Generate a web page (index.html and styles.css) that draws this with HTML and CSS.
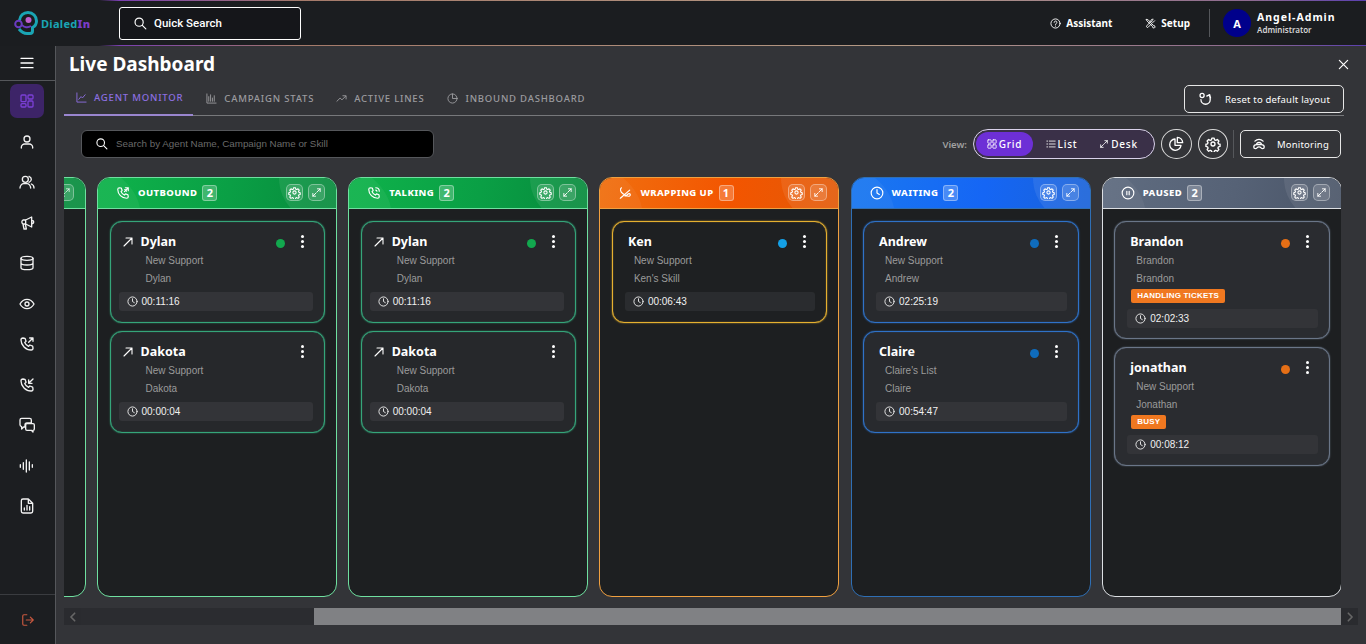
FILE: index.html
```html
<!DOCTYPE html>
<html lang="en">
<head>
  <meta charset="UTF-8">
  <title>Live Dashboard</title>
  <link rel="stylesheet" href="styles.css">
</head>
<body>

  <svg class="sprite" width="0" height="0">
    <symbol id="i-search" viewBox="0 0 24 24"><circle cx="10.5" cy="10.5" r="7"/><path d="M16 16l6 6"/></symbol>
    <symbol id="i-gear" viewBox="0 0 24 24"><circle cx="12" cy="12" r="3"/><path d="M10.3 3.2h3.4l.6 2.6 1.9.8 2.3-1.4 2.3 2.4-1.4 2.3.8 1.9 2.4.6v3.2l-2.4.6-.8 1.9 1.4 2.3-2.3 2.4-2.3-1.4-1.9.8-.6 2.6h-3.4l-.6-2.6-1.9-.8-2.3 1.4-2.3-2.4 1.4-2.3-.8-1.9-2.4-.6v-3.2l2.4-.6.8-1.9-1.4-2.3 2.3-2.4 2.3 1.4 1.9-.8z"/></symbol>
    <symbol id="i-expand" viewBox="0 0 24 24"><path d="M4 20l7-7M4 14v6h6M20 4l-7 7M14 4h6v6"/></symbol>
    <symbol id="i-clock" viewBox="0 0 24 24"><circle cx="12" cy="12" r="10"/><path d="M12 6v6l4 2.5"/></symbol>
    <symbol id="i-arrow" viewBox="0 0 24 24"><path d="M4 20L20 4M8 4h12v12"/></symbol>
    <symbol id="i-phone" viewBox="0 0 24 24"><path d="M6 3l3 .5 1.6 4.3-2 1.8c1 2.4 3 4.6 5.8 5.9l1.9-2 4.2 1.6.5 3.2c0 1.6-1.2 2.7-2.8 2.7C10 21 3 13.800 3 6c0-1.700 1.300-3 3-3z"/></symbol>
  </svg>

  <header class="topbar">
    <div class="logo">
      <svg class="logo-mark" viewBox="0 0 26 26" width="26" height="26">
        <path d="M6.500 10.500C7 5.500 10.500 2.500 15 2.500c5 0 8.500 3.800 8.500 8.500 0 3.200-1.500 5.200-4 6.500v3.500c0 1.500-1 2.500-2.500 2.500h-3c-3 0-6-2-8-4.500" fill="none" stroke="#1aa5b4" stroke-width="3"/>
        <circle cx="5.500" cy="14" r="3.300" fill="none" stroke="#6a3bc0" stroke-width="2"/>
        <circle cx="15.500" cy="10" r="3" fill="#c05fd0"/>
        <path d="M9 15c2 2.500 6 3 9 1" fill="none" stroke="#6a3bc0" stroke-width="2"/>
      </svg>
      <span class="logo-text">Dialed<b>In</b></span>
    </div>
    <div class="quick-search">
      <svg class="ico ico-14"><use href="#i-search"/></svg>
      <span>Quick Search</span>
    </div>
    <div class="top-right">
      <a class="top-link">
        <svg class="ico ico-11" viewBox="0 0 24 24"><circle cx="12" cy="12" r="10"/><path d="M9 9.500c0-4 6-4 6 0 0 2.500-3 2.500-3 5M12 17.500v.5"/></svg>
        Assistant
      </a>
      <a class="top-link top-link-setup">
        <svg class="ico ico-11" viewBox="0 0 24 24"><path d="M3 3l4 1 11 12 3 1 1 3-2 2-3-1-1-3L5 7zM21 6l-4 4-3-3 4-4c-3-1-6 1-5 4L4 17c-1 1-1 2 0 3s2 1 3 0l6-6"/></svg>
        Setup
      </a>
      <div class="user">
        <div class="avatar">A</div>
        <div>
          <div class="user-name">Angel-Admin</div>
          <div class="user-role">Administrator</div>
        </div>
      </div>
    </div>
  </header>

  <div class="shell">
    <nav class="sidebar">
      <div class="menu-btn">
        <svg class="ico ico-16" viewBox="0 0 24 24"><path d="M3 5h18M3 12h18M3 19h18"/></svg>
      </div>
      <div class="nav-list">
        <a class="nav-item active"><svg class="ico ico-16" viewBox="0 0 24 24"><rect x="3" y="3" width="7.500" height="10" rx="1.500"/><rect x="13.500" y="3" width="7.500" height="6" rx="1.500"/><rect x="3" y="16" width="7.500" height="5" rx="1.500"/><rect x="13.500" y="12" width="7.500" height="9" rx="1.500"/></svg></a>
        <a class="nav-item"><svg class="ico ico-16" viewBox="0 0 24 24"><circle cx="12" cy="7.500" r="4.500"/><path d="M3.500 21v-1c0-3 2.500-5 5-5h7c2.500 0 5 2 5 5v1"/></svg></a>
        <a class="nav-item"><svg class="ico ico-16" viewBox="0 0 24 24"><circle cx="9.500" cy="8" r="4.500"/><path d="M1.500 21c0-4 3-6.500 5.500-6.500h5c2.500 0 5.500 2.500 5.500 6.500M15 3.500c2.500 1 3.500 2.700 3.500 4.500s-1 3.500-3.500 4.500M18.500 15c2.500 1 4 3 4 6"/></svg></a>
        <a class="nav-item"><svg class="ico ico-16" viewBox="0 0 24 24"><path d="M10 7.500L19 3v15l-9-4.500H6A3.500 3.500 0 0 1 6 7.500zM10 7.500v6M6 13.500l1.500 7.500h3.500L9.500 13.500M19 8c2 0 3 1 3 2.500S21 13 19 13"/></svg></a>
        <a class="nav-item"><svg class="ico ico-16" viewBox="0 0 24 24"><ellipse cx="12" cy="5" rx="9" ry="3"/><path d="M3 5v14c0 1.700 4 3 9 3s9-1.300 9-3V5M3 12c0 1.700 4 3 9 3s9-1.300 9-3"/></svg></a>
        <a class="nav-item"><svg class="ico ico-16" viewBox="0 0 24 24"><path d="M1.500 12S5.500 5 12 5s10.500 7 10.500 7-4 7-10.500 7S1.500 12 1.500 12z"/><circle cx="12" cy="12" r="3"/></svg></a>
        <a class="nav-item"><svg class="ico ico-16" viewBox="0 0 24 24"><use href="#i-phone"/><path d="M14.500 9.500L21 3M16 3h5v5"/></svg></a>
        <a class="nav-item"><svg class="ico ico-16" viewBox="0 0 24 24"><use href="#i-phone"/><path d="M21 3l-6.500 6.500M14.500 4.500v5h5"/></svg></a>
        <a class="nav-item"><svg class="ico ico-16" viewBox="0 0 24 24"><path d="M4 2h12c1.500 0 2.500 1 2.500 2.500V9H12c-2 0-3 1-3 3v3H7l-3 3v-3.500C2.500 14 1.500 13 1.500 11.500v-7C1.500 3 2.500 2 4 2z"/><path d="M12 10h9c1 0 2 1 2 2v6c0 1-1 2-2 2v2.500L18.500 20H12c-1 0-2-1-2-2v-6c0-1 1-2 2-2z"/></svg></a>
        <a class="nav-item"><svg class="ico ico-16" viewBox="0 0 24 24"><path d="M2 10v4M6.500 7v10M11 3v18M15.500 6v12M20 10v4"/></svg></a>
        <a class="nav-item"><svg class="ico ico-16" viewBox="0 0 24 24"><path d="M14 1.500H6C4.500 1.500 3.500 2.500 3.500 4v16c0 1.500 1 2.500 2.500 2.500h12c1.500 0 2.500-1 2.500-2.500V8zM14 1.500V8h6.500M8 18v-3M12 18v-7M16 18v-5"/></svg></a>
      </div>
      <div class="logout">
        <svg class="ico ico-14 logout-ico" viewBox="0 0 24 24"><path d="M10 3H5C3.500 3 3 4 3 5v14c0 1 .5 2 2 2h5M9 12h12M16 7l5 5-5 5"/></svg>
      </div>
    </nav>

    <main class="main">
      <div class="title-row">
        <h1>Live Dashboard</h1>
        <svg class="ico ico-11 close" viewBox="0 0 24 24"><path d="M3 3l18 18M21 3L3 21"/></svg>
      </div>

      <div class="tab-row">
        <a class="tab active"><svg class="ico ico-11" viewBox="0 0 24 24"><path d="M2 2v20h20M6 16l5-6 3 3 6-7"/></svg>AGENT MONITOR</a>
        <a class="tab tab-campaign"><svg class="ico ico-11" viewBox="0 0 24 24"><path d="M2 2v20h20M6 18V8M10 18V4M14 18v-7M18 18V6"/></svg>CAMPAIGN STATS</a>
        <a class="tab tab-lines"><svg class="ico ico-11" viewBox="0 0 24 24"><path d="M2 18l7-7 4 4 8-8M15 6h7v7"/></svg>ACTIVE LINES</a>
        <a class="tab"><svg class="ico ico-11" viewBox="0 0 24 24"><circle cx="12" cy="12" r="10"/><path d="M12 2v10h10"/></svg>INBOUND DASHBOARD</a>
        <a class="btn reset-btn">
          <svg class="ico ico-14" viewBox="0 0 24 24"><circle cx="7" cy="6" r="3.500"/><path d="M5 13a8 8 0 0 0 16 0c0-3-.5-5-1.500-7M15 7l5-2.500 1.500 5.500"/></svg>
          Reset to default layout
        </a>
      </div>

      <div class="toolbar">
        <div class="agent-search">
          <svg class="ico ico-13"><use href="#i-search"/></svg>
          <span>Search by Agent Name, Campaign Name or Skill</span>
        </div>
        <span class="view-label">View:</span>
        <div class="view-toggle">
          <a class="view-opt active"><svg class="ico ico-10" viewBox="0 0 24 24"><rect x="2" y="2" width="8" height="8" rx="1"/><rect x="14" y="2" width="8" height="8" rx="1"/><rect x="2" y="14" width="8" height="8" rx="1"/><rect x="14" y="14" width="8" height="8" rx="1"/></svg>Grid</a>
          <a class="view-opt"><svg class="ico ico-10" viewBox="0 0 24 24"><path d="M2 5h2M8 5h14M2 12h2M8 12h14M2 19h2M8 19h14"/></svg>List</a>
          <a class="view-opt"><svg class="ico ico-10"><use href="#i-expand"/></svg>Desk</a>
        </div>
        <a class="round-btn"><svg class="ico ico-16" viewBox="0 0 24 24"><path d="M10.500 4.500A8.500 8.500 0 1 0 19.500 14H10.500zM14 2a8 8 0 0 1 8 8h-8z"/></svg></a>
        <a class="round-btn"><svg class="ico ico-16"><use href="#i-gear"/></svg></a>
        <span class="tool-sep"></span>
        <a class="btn monitor-btn">
          <svg class="ico ico-14" viewBox="0 0 24 24"><path d="M5 7c4-4 10-4 14 0M8 11c2.500-2 5.500-2 8 0M3 17c0-3 3-4 5-4h8c2 0 5 1 5 4 0 2-1 3-3 3-3 0-2-3-6-3s-3 3-6 3c-2 0-3-1-3-3z"/></svg>
          Monitoring
        </a>
      </div>

      <div class="board">

        <section class="col col-green col-cut">
          <div class="col-head">
            <div class="head-tools">
              <a class="head-btn"><svg class="ico ico-11"><use href="#i-expand"/></svg></a>
            </div>
          </div>
        </section>

        <section class="col col-green">
          <div class="col-head">
            <svg class="ico ico-14 head-ico" viewBox="0 0 24 24"><use href="#i-phone"/><path d="M14.500 9.500L21 3M16 3h5v5M18 9a6 6 0 0 0-3-3"/></svg>
            <span class="col-title">OUTBOUND</span>
            <span class="count">2</span>
            <div class="head-tools">
              <a class="head-btn"><svg class="ico ico-13"><use href="#i-gear"/></svg></a>
              <a class="head-btn"><svg class="ico ico-11"><use href="#i-expand"/></svg></a>
            </div>
          </div>
          <div class="col-body">
            <article class="card card-call">
              <div class="card-top">
                <svg class="ico ico-12 call-arrow"><use href="#i-arrow"/></svg>
                <span class="name">Dylan</span>
                <span class="dot dot-green"></span>
                <span class="kebab"><i></i><i></i><i></i></span>
              </div>
              <p class="sub">New Support</p>
              <p class="sub">Dylan</p>
              <div class="timer"><svg class="ico ico-11"><use href="#i-clock"/></svg>00:11:16</div>
            </article>
            <article class="card card-call">
              <div class="card-top">
                <svg class="ico ico-12 call-arrow"><use href="#i-arrow"/></svg>
                <span class="name">Dakota</span>
                <span class="kebab kebab-only"><i></i><i></i><i></i></span>
              </div>
              <p class="sub">New Support</p>
              <p class="sub">Dakota</p>
              <div class="timer"><svg class="ico ico-11"><use href="#i-clock"/></svg>00:00:04</div>
            </article>
          </div>
        </section>

        <section class="col col-green">
          <div class="col-head">
            <svg class="ico ico-14 head-ico" viewBox="0 0 24 24"><use href="#i-phone"/><path d="M15 3a6 6 0 0 1 6 6M15 7a2 2 0 0 1 2 2"/></svg>
            <span class="col-title">TALKING</span>
            <span class="count">2</span>
            <div class="head-tools">
              <a class="head-btn"><svg class="ico ico-13"><use href="#i-gear"/></svg></a>
              <a class="head-btn"><svg class="ico ico-11"><use href="#i-expand"/></svg></a>
            </div>
          </div>
          <div class="col-body">
            <article class="card card-call">
              <div class="card-top">
                <svg class="ico ico-12 call-arrow"><use href="#i-arrow"/></svg>
                <span class="name">Dylan</span>
                <span class="dot dot-green"></span>
                <span class="kebab"><i></i><i></i><i></i></span>
              </div>
              <p class="sub">New Support</p>
              <p class="sub">Dylan</p>
              <div class="timer"><svg class="ico ico-11"><use href="#i-clock"/></svg>00:11:16</div>
            </article>
            <article class="card card-call">
              <div class="card-top">
                <svg class="ico ico-12 call-arrow"><use href="#i-arrow"/></svg>
                <span class="name">Dakota</span>
                <span class="kebab kebab-only"><i></i><i></i><i></i></span>
              </div>
              <p class="sub">New Support</p>
              <p class="sub">Dakota</p>
              <div class="timer"><svg class="ico ico-11"><use href="#i-clock"/></svg>00:00:04</div>
            </article>
          </div>
        </section>

        <section class="col col-orange">
          <div class="col-head">
            <svg class="ico ico-14 head-ico" viewBox="0 0 24 24"><path d="M4 21L20 7M6 3C3 5 4 10 8 13c4 3 8 6 12 4 2-1 1-4-1-4-3 0-3 4-7 4"/></svg>
            <span class="col-title">WRAPPING UP</span>
            <span class="count">1</span>
            <div class="head-tools">
              <a class="head-btn"><svg class="ico ico-13"><use href="#i-gear"/></svg></a>
              <a class="head-btn"><svg class="ico ico-11"><use href="#i-expand"/></svg></a>
            </div>
          </div>
          <div class="col-body">
            <article class="card">
              <div class="card-top">
                <span class="name">Ken</span>
                <span class="dot dot-sky"></span>
                <span class="kebab"><i></i><i></i><i></i></span>
              </div>
              <p class="sub">New Support</p>
              <p class="sub">Ken's Skill</p>
              <div class="timer"><svg class="ico ico-11"><use href="#i-clock"/></svg>00:06:43</div>
            </article>
          </div>
        </section>

        <section class="col col-blue">
          <div class="col-head">
            <svg class="ico ico-14 head-ico"><use href="#i-clock"/></svg>
            <span class="col-title">WAITING</span>
            <span class="count">2</span>
            <div class="head-tools">
              <a class="head-btn"><svg class="ico ico-13"><use href="#i-gear"/></svg></a>
              <a class="head-btn"><svg class="ico ico-11"><use href="#i-expand"/></svg></a>
            </div>
          </div>
          <div class="col-body">
            <article class="card">
              <div class="card-top">
                <span class="name">Andrew</span>
                <span class="dot dot-blue"></span>
                <span class="kebab"><i></i><i></i><i></i></span>
              </div>
              <p class="sub">New Support</p>
              <p class="sub">Andrew</p>
              <div class="timer"><svg class="ico ico-11"><use href="#i-clock"/></svg>02:25:19</div>
            </article>
            <article class="card">
              <div class="card-top">
                <span class="name">Claire</span>
                <span class="dot dot-blue"></span>
                <span class="kebab"><i></i><i></i><i></i></span>
              </div>
              <p class="sub">Claire's List</p>
              <p class="sub">Claire</p>
              <div class="timer"><svg class="ico ico-11"><use href="#i-clock"/></svg>00:54:47</div>
            </article>
          </div>
        </section>

        <section class="col col-grey">
          <div class="col-head">
            <svg class="ico ico-14 head-ico" viewBox="0 0 24 24"><circle cx="12" cy="12" r="10"/><path d="M10 9v6M14 9v6"/></svg>
            <span class="col-title">PAUSED</span>
            <span class="count">2</span>
            <div class="head-tools">
              <a class="head-btn"><svg class="ico ico-13"><use href="#i-gear"/></svg></a>
              <a class="head-btn"><svg class="ico ico-11"><use href="#i-expand"/></svg></a>
            </div>
          </div>
          <div class="col-body">
            <article class="card card-tagged">
              <div class="card-top">
                <span class="name">Brandon</span>
                <span class="dot dot-orange"></span>
                <span class="kebab"><i></i><i></i><i></i></span>
              </div>
              <p class="sub">Brandon</p>
              <p class="sub">Brandon</p>
              <span class="tag">HANDLING TICKETS</span>
              <div class="timer"><svg class="ico ico-11"><use href="#i-clock"/></svg>02:02:33</div>
            </article>
            <article class="card">
              <div class="card-top">
                <span class="name">jonathan</span>
                <span class="dot dot-orange"></span>
                <span class="kebab"><i></i><i></i><i></i></span>
              </div>
              <p class="sub">New Support</p>
              <p class="sub">Jonathan</p>
              <span class="tag">BUSY</span>
              <div class="timer"><svg class="ico ico-11"><use href="#i-clock"/></svg>00:08:12</div>
            </article>
          </div>
        </section>

      </div>

      <div class="hscroll">
        <span class="hscroll-btn"><svg class="ico ico-10" viewBox="0 0 24 24"><path d="M16 3L7 12l9 9"/></svg></span>
        <span class="hscroll-track"><span class="hscroll-thumb"></span></span>
        <span class="hscroll-btn"><svg class="ico ico-10" viewBox="0 0 24 24"><path d="M8 3l9 9-9 9"/></svg></span>
      </div>
    </main>
  </div>

</body>
</html>
```

FILE: styles.css
```css
* {
  box-sizing: border-box;
}

html, body {
  height: 100%;
}

body {
  margin: 0;
  display: flex;
  flex-direction: column;
  overflow: hidden;
  background-color: #333438;
  color: #fff;
  font-family: "Noto Sans", sans-serif;
}

.sprite {
  position: absolute;
}

.ico {
  fill: none;
  stroke: currentColor;
  stroke-width: 2;
  stroke-linecap: round;
  stroke-linejoin: round;
  flex: none;
}

.ico-10 { width: 10px; height: 10px; }
.ico-11 { width: 11px; height: 11px; }
.ico-12 { width: 12px; height: 12px; }
.ico-13 { width: 13px; height: 13px; }
.ico-14 { width: 14px; height: 14px; }
.ico-16 { width: 16px; height: 16px; }

/* top bar */
.topbar {
  height: 46px;
  flex: none;
  display: flex;
  align-items: center;
  background-color: #1b1d20;
  border-top: 1px solid;
  border-bottom: 1px solid #55575b;
  border-image: linear-gradient(90deg, #1b1d20 0, #1b1d20 100px, #7a3fb0 120px, #a57a6a 300px, #b59a85 900px, #8d6a90 1250px, #5a3fb0 1366px) 1;
  border-bottom-color: #55575b;
}

.logo {
  width: 119px;
  padding-left: 13px;
  display: flex;
  align-items: center;
  gap: 2px;
}

.logo-text {
  font-size: 11px;
  font-weight: 700;
  letter-spacing: .3px;
  color: #1aa5b4;
}

.logo-text b {
  color: #7a3bc8;
}

.quick-search {
  width: 182px;
  height: 33px;
  display: flex;
  align-items: center;
  gap: 7px;
  padding-left: 13px;
  background-color: #15161a;
  border: 1px solid #fff;
  border-radius: 3px;
  font-family: Roboto, sans-serif;
  font-size: 11.500px;
  font-weight: 500;
}

.top-right {
  margin-left: auto;
  display: flex;
  align-items: center;
}

.top-link {
  display: flex;
  align-items: center;
  gap: 5px;
  font-size: 10px;
  font-weight: 700;
}

.top-link-setup {
  margin-left: 33px;
}

.user {
  display: flex;
  align-items: center;
  gap: 6px;
  margin-left: 19px;
  padding-left: 13px;
  width: 157px;
  border-left: 1px solid #55575b;
}

.avatar {
  width: 28px;
  height: 28px;
  border-radius: 50%;
  background-color: #00008b;
  display: flex;
  align-items: center;
  justify-content: center;
  font-size: 11px;
  font-weight: 700;
}

.user-name {
  font-size: 10.500px;
  font-weight: 700;
  letter-spacing: 1px;
  line-height: 14px;
}

.user-role {
  font-size: 8px;
  font-weight: 600;
  line-height: 12px;
  color: #d6d6d6;
}

/* shell */
.shell {
  flex: 1;
  display: flex;
  min-height: 0;
}

.sidebar {
  width: 56px;
  flex: none;
  display: flex;
  flex-direction: column;
  background-color: #1c1e21;
  border-right: 1px solid #55575b;
}

.menu-btn {
  height: 35px;
  flex: none;
  display: flex;
  align-items: center;
  justify-content: center;
  padding-right: 1px;
  border-bottom: 1px solid #55575b;
}

.nav-list {
  flex: 1;
  display: flex;
  flex-direction: column;
  align-items: center;
  padding-top: 3px;
  padding-right: 1px;
}

.nav-item {
  width: 34px;
  height: 34px;
  margin-bottom: 6.500px;
  flex: none;
  display: flex;
  align-items: center;
  justify-content: center;
  border-radius: 7px;
  color: #f2f2f2;
}

.nav-item.active {
  background-color: #3d2468;
  color: #7b3fd6;
}

.logout {
  height: 50px;
  flex: none;
  display: flex;
  align-items: center;
  justify-content: center;
  border-top: 1px solid #3a3c40;
}

.logout-ico {
  color: #c8583f;
}

/* main */
.main {
  flex: 1;
  min-width: 0;
  padding-left: 8px;
  display: flex;
  flex-direction: column;
}

.title-row {
  height: 36px;
  flex: none;
  display: flex;
  align-items: center;
  padding-left: 5px;
  padding-right: 17px;
}

h1 {
  margin: 0;
  font-size: 19px;
  font-weight: 700;
}

.close {
  margin-left: auto;
  stroke-width: 2.600;
}

.tab-row {
  height: 34px;
  flex: none;
  width: 1280px;
  display: flex;
  align-items: flex-end;
  border-bottom: 1px solid #77787b;
}

.tab {
  height: 31px;
  display: flex;
  align-items: center;
  gap: 7px;
  padding: 0 12px 3px 12px;
  margin-right: 1px;
  font-size: 9.500px;
  font-weight: 500;
  letter-spacing: .8px;
  color: #9b9b9f;
}

.tab-campaign {
  padding-right: 9px;
}

.tab-lines {
  padding-right: 10px;
}

.tab.active {
  color: #8c6fe0;
  border-bottom: 2px solid #9a86cf;
  margin-bottom: -1px;
  height: 32px;
  padding-right: 10px;
}

.btn {
  display: flex;
  align-items: center;
  border: 1px solid #e6e6e6;
  border-radius: 5px;
  font-size: 9.500px;
  font-weight: 400;
  letter-spacing: .2px;
}

.btn .ico {
  stroke-width: 2.200;
}

.reset-btn {
  margin-left: auto;
  align-self: flex-start;
  margin-top: 3px;
  width: 160px;
  height: 28px;
  padding-left: 13px;
  gap: 13px;
}

.toolbar {
  height: 61px;
  flex: none;
  display: flex;
  align-items: center;
  padding-left: 17px;
  padding-right: 25px;
  padding-bottom: 5px;
}

.agent-search {
  width: 353px;
  height: 28px;
  display: flex;
  align-items: center;
  gap: 8px;
  padding-left: 13px;
  padding-bottom: 2px;
  background-color: #000;
  border: 1px solid #55575b;
  border-radius: 6px;
  font-family: "Liberation Sans", Arial, sans-serif;
  font-size: 9.800px;
  color: #6a6a6a;
}

.agent-search .ico {
  color: #fff;
}

.view-label {
  margin-left: auto;
  margin-right: 6px;
  font-size: 9.500px;
  font-weight: 600;
  color: #a0a0a0;
}

.view-toggle {
  width: 182px;
  height: 30px;
  display: flex;
  align-items: center;
  padding-left: 2px;
  background-color: #3a3048;
  border: 1px solid #d9d2ea;
  border-radius: 15px;
}

.view-opt {
  height: 24px;
  width: 57px;
  display: flex;
  align-items: center;
  justify-content: center;
  gap: 2px;
  border-radius: 12px;
  font-size: 10px;
  font-weight: 500;
  letter-spacing: .8px;
}

.view-opt.active {
  background-color: #6d2fd6;
}

.round-btn {
  width: 30.500px;
  height: 30px;
  margin-left: 6px;
  display: flex;
  align-items: center;
  justify-content: center;
  border: 1px solid #d8d8d8;
  border-radius: 50%;
}

.tool-sep {
  width: 1px;
  height: 28px;
  margin: 0 6px 0 5px;
  background-color: #55575b;
}

.monitor-btn {
  width: 101px;
  height: 28px;
  padding-left: 11px;
  gap: 11px;
}

/* board */
.board {
  width: 1277px;
  height: 420px;
  flex: none;
  display: flex;
  gap: 11.200px;
  overflow: hidden;
}

.col {
  width: 240px;
  flex: none;
  display: flex;
  flex-direction: column;
  overflow: hidden;
  background-color: #1d1f21;
  border: 1px solid var(--col-line);
  border-radius: 13px;
}

.col-cut {
  margin-left: -218.200px;
}

.col-green {
  --col-line: #6fe0a0;
  --head: linear-gradient(100deg, #0fb34b, #0a9f45 55%, #078a3c);
  --card-line: #35a57a;
  --card-bg: #26282b;
}

.col-orange {
  --col-line: #f0a040;
  --head: linear-gradient(100deg, #f07010, #f35500 55%, #e25a08);
  --card-line: #e5b030;
  --card-bg: #1e2022;
}

.col-blue {
  --col-line: #2f6fb5;
  --head: linear-gradient(100deg, #1a78f0, #1566f5 55%, #1a62d8);
  --card-line: #2f72c8;
  --card-bg: #282a2e;
}

.col-grey {
  --col-line: #dcdfe3;
  --head: linear-gradient(100deg, #5f6c80, #566276 55%, #4a5568);
  --card-line: #6a7688;
  --card-bg: #2a2c30;
}

.col-head {
  position: relative;
  height: 31px;
  flex: none;
  display: flex;
  align-items: center;
  padding-left: 18px;
  padding-right: 11px;
  padding-bottom: 1px;
  background: var(--head);
  border-bottom: 1px solid var(--col-line);
  overflow: hidden;
}

.col-head::before {
  content: "";
  position: absolute;
  left: -57px;
  top: -10px;
  width: 100px;
  height: 100px;
  border-radius: 50%;
  background-color: rgba(255, 255, 255, .05);
}

.col-head::after {
  content: "";
  position: absolute;
  right: -33px;
  top: -45px;
  width: 90px;
  height: 90px;
  border-radius: 50%;
  background-color: rgba(255, 255, 255, .08);
}

.head-ico {
  margin-right: 8px;
  position: relative;
  z-index: 1;
}

.col-title {
  position: relative;
  z-index: 1;
  font-size: 9.500px;
  font-weight: 800;
  letter-spacing: .4px;
}

.count {
  position: relative;
  z-index: 1;
  min-width: 15px;
  height: 16px;
  margin-left: 5px;
  display: flex;
  align-items: center;
  justify-content: center;
  background-color: rgba(255, 255, 255, .22);
  border: 1px solid rgba(255, 255, 255, .35);
  border-radius: 3px;
  font-size: 11px;
  font-weight: 700;
}

.head-tools {
  margin-left: auto;
  display: flex;
  gap: 5px;
  position: relative;
  z-index: 1;
}

.head-btn {
  width: 17px;
  height: 17px;
  display: flex;
  align-items: center;
  justify-content: center;
  background-color: rgba(255, 255, 255, .14);
  border: 1px solid rgba(255, 255, 255, .35);
  border-radius: 5px;
}

.col-cut .head-btn .ico {
  stroke-width: 1.500;
}

.col-body {
  padding: 12px 11px 0 11.500px;
  display: flex;
  flex-direction: column;
  gap: 8px;
}

.card {
  padding: 9px 11px 11px 12px;
  background-color: var(--card-bg);
  border: 1px solid var(--card-line);
  border-radius: 12px;
  box-shadow: 0 0 1.500px var(--card-line), inset 0 0 1px var(--card-line);
}

.card-call {
  padding-left: 8px;
}

.card-tagged {
  padding-bottom: 10px;
}

.card-top {
  height: 21px;
  display: flex;
  align-items: center;
  padding-left: 3px;
}

.call-arrow {
  margin-right: 7px;
  stroke-width: 2.200;
}

.name {
  font-size: 12.500px;
  font-weight: 700;
}

.dot {
  width: 9px;
  height: 9px;
  margin-left: auto;
  margin-top: 3px;
  border-radius: 50%;
}

.dot-green { background-color: #12a84e; }
.dot-sky { background-color: #14a0e6; }
.dot-blue { background-color: #0f6cbd; }
.dot-orange { background-color: #e56f16; }

.kebab {
  width: 3px;
  margin-left: 16px;
  margin-right: 9px;
  display: flex;
  flex-direction: column;
  gap: 2px;
}

.kebab-only {
  margin-left: auto;
}

.kebab i {
  width: 3px;
  height: 3px;
  border-radius: 50%;
  background-color: #fff;
}

.sub {
  margin: 0;
  padding-left: 9px;
  font-family: "Liberation Sans", Arial, sans-serif;
  font-size: 10px;
  line-height: 18px;
  color: #9b9b9b;
}

.card-call .sub {
  padding-left: 27px;
}

.tag {
  display: table;
  margin: 1px 0 6px 4px;
  padding: 0 6px;
  height: 14px;
  background-color: #f07820;
  border-radius: 2px;
  font-family: "Liberation Sans", Arial, sans-serif;
  font-size: 8px;
  font-weight: 700;
  letter-spacing: .2px;
  line-height: 14px;
}

.timer {
  height: 19px;
  margin-top: 4px;
  display: flex;
  align-items: center;
  gap: 4px;
  padding-left: 8px;
  background-color: #333438;
  border-radius: 3px;
  font-family: "Liberation Sans", Arial, sans-serif;
  font-size: 10px;
  color: #f0f0f0;
}

.tag + .timer {
  margin-top: 0;
}

.col-orange .timer {
  background-color: #2a2c2f;
}

/* scrollbar under the board */
.hscroll {
  width: 1294px;
  height: 17px;
  margin-top: 11px;
  flex: none;
  display: flex;
}

.hscroll-btn {
  width: 17px;
  flex: none;
  display: flex;
  align-items: center;
  justify-content: center;
  background-color: #2a2b2f;
  color: #666;
}

.hscroll-btn .ico {
  stroke-width: 4;
}

.hscroll-track {
  flex: 1;
  background-color: #2b2c30;
  display: flex;
  justify-content: flex-end;
}

.hscroll-thumb {
  width: 1027px;
  background-color: #808184;
}
```
